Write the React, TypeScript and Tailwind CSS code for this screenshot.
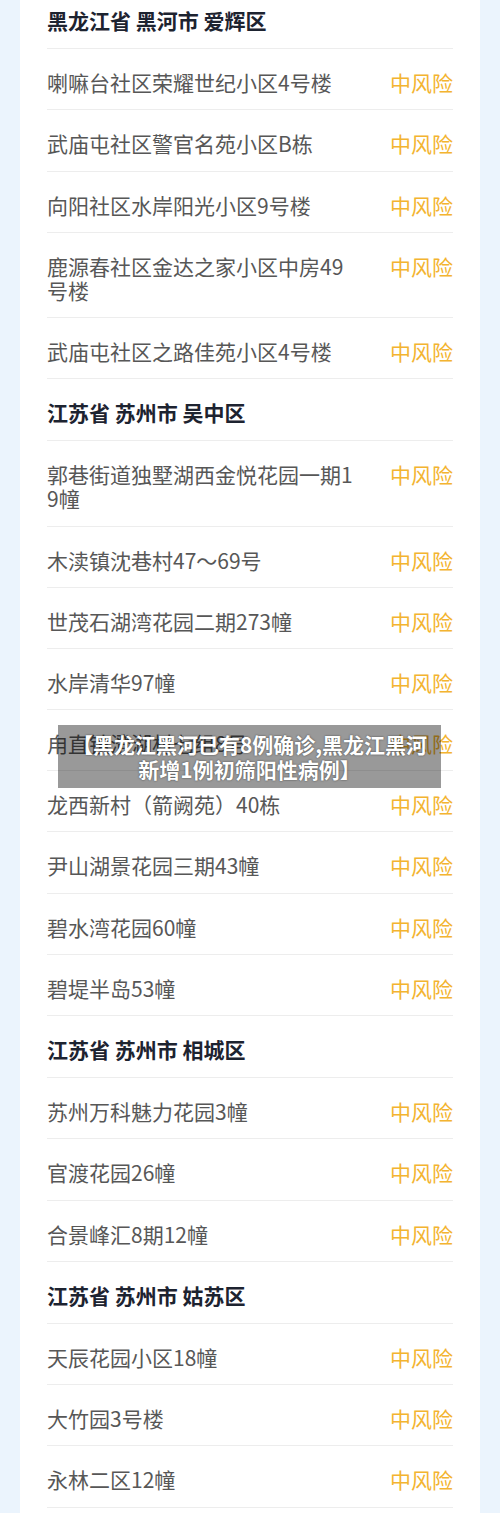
import React from "react";

type Section = { title: string; items: string[] };

const sections: Section[] = [
  {
    title: "黑龙江省 黑河市 爱辉区",
    items: [
      "喇嘛台社区荣耀世纪小区4号楼",
      "武庙屯社区警官名苑小区B栋",
      "向阳社区水岸阳光小区9号楼",
      "鹿源春社区金达之家小区中房49号楼",
      "武庙屯社区之路佳苑小区4号楼",
    ],
  },
  {
    title: "江苏省 苏州市 吴中区",
    items: [
      "郭巷街道独墅湖西金悦花园一期19幢",
      "木渎镇沈巷村47～69号",
      "世茂石湖湾花园二期273幢",
      "水岸清华97幢",
      "甪直镇澄湖村七组8号",
      "龙西新村（箭阙苑）40栋",
      "尹山湖景花园三期43幢",
      "碧水湾花园60幢",
      "碧堤半岛53幢",
    ],
  },
  {
    title: "江苏省 苏州市 相城区",
    items: ["苏州万科魅力花园3幢", "官渡花园26幢", "合景峰汇8期12幢"],
  },
  {
    title: "江苏省 苏州市 姑苏区",
    items: ["天辰花园小区18幢", "大竹园3号楼", "永林二区12幢"],
  },
];

const font = { fontFamily: '"Noto Sans CJK SC", "Noto Sans", sans-serif' };

export default function App() {
  return (
    <div
      className="relative w-[500px] h-[1513px] overflow-hidden bg-[#ebf4fd]"
      style={font}
    >
      <div className="mx-[20px] w-[460px] h-full bg-white px-[27px]">
        {sections.map((s, si) => (
          <div key={si}>
            <div
              className={`border-b border-[#ededed] ${
                si === 0 ? "pt-[8px]" : "pt-[21px]"
              } pb-[16.2px] text-[21px] leading-[24px] font-bold text-[#1d2330]`}
            >
              {s.title}
            </div>
            {s.items.map((it, ii) => (
              <div
                key={ii}
                className="flex items-start justify-between border-b border-[#ededed] pt-[21px] pb-[15.2px] text-[21px] leading-[24px]"
              >
                <div className="w-[312px] break-all text-[#575757]">{it}</div>
                <div className="shrink-0 text-[#f3b430]">中风险</div>
              </div>
            ))}
          </div>
        ))}
      </div>
      <div className="absolute left-[58px] top-[725px] w-[383px] h-[63px] bg-black/40 flex items-center justify-center text-center text-white font-bold text-[21px] leading-[25px] [text-shadow:0_0_2px_rgba(0,0,0,0.6)]">
        <div>
          【黑龙江黑河已有8例确诊,黑龙江黑河
          <br />
          新增1例初筛阳性病例】
        </div>
      </div>
    </div>
  );
}
